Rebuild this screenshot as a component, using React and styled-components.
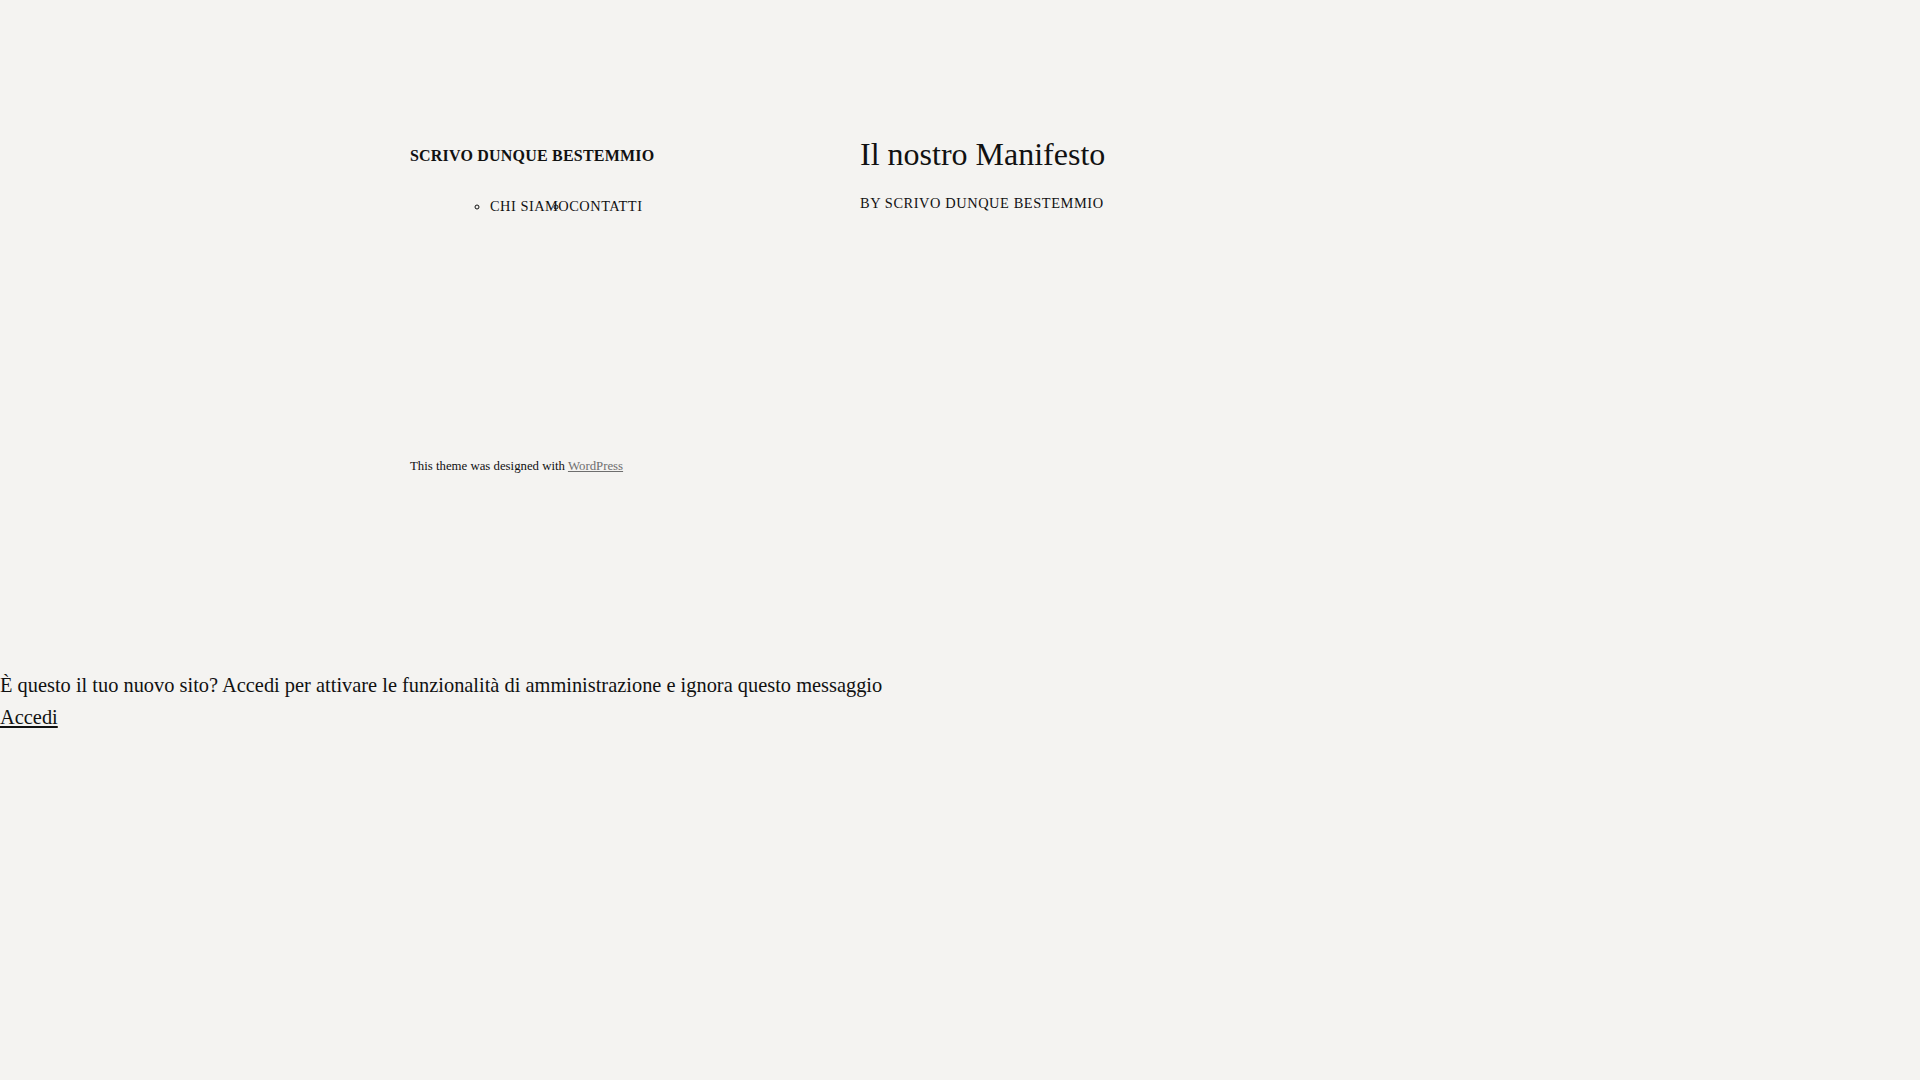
import React from "react";
import styled, { createGlobalStyle } from "styled-components";

const GlobalStyle = createGlobalStyle`
  body {
    margin: 0;
    background: #f4f3f1;
    color: #111;
    font-family: "Liberation Serif", "Times New Roman", serif;
  }
`;

function App() {
  return (
    <>
      <GlobalStyle />
      <Page>
        <Sidebar>
          <SiteTitle>SCRIVO DUNQUE BESTEMMIO</SiteTitle>
          <Nav>
            <NavItem>CHI SIAMO</NavItem>
            <NavItem>CONTATTI</NavItem>
          </Nav>
          <Credit>
            This theme was designed with <CreditLink href="#">WordPress</CreditLink>
          </Credit>
        </Sidebar>
        <Main>
          <PostTitle>Il nostro Manifesto</PostTitle>
          <Byline>BY SCRIVO DUNQUE BESTEMMIO</Byline>
        </Main>
      </Page>
      <Notice>
        <p>È questo il tuo nuovo sito? Accedi per attivare le funzionalità di amministrazione e ignora questo messaggio</p>
        <NoticeLink href="#">Accedi</NoticeLink>
      </Notice>
    </>
  );
}

export default App;

const Page = styled.div`
  display: flex;
  padding: 136px 0 0 410px;
`;
const Sidebar = styled.div`
  width: 450px;
  display: flex;
  flex-direction: column;
  align-items: flex-start;
`;
const SiteTitle = styled.div`
  margin-top: 11px;
  font-size: 16px;
  font-weight: 700;
  letter-spacing: 0.2px;
`;
const Nav = styled.ul`
  display: flex;
  gap: 0;
  list-style: circle;
  margin: 33px 0 0 0;
  padding-left: 80px;
`;
const NavItem = styled.li`
  font-size: 14.4px;
  letter-spacing: 0.5px;
`;
const Credit = styled.div`
  margin-top: 244px;
  font-size: 12.8px;
`;
const CreditLink = styled.a`
  color: #6e6e6e;
`;
const Main = styled.div`
  display: flex;
  flex-direction: column;
  align-items: flex-start;
`;
const PostTitle = styled.h1`
  margin: 0;
  font-size: 32px;
  font-weight: 400;
`;
const Byline = styled.div`
  margin-top: 22px;
  font-size: 14.4px;
  letter-spacing: 0.58px;
`;
const Notice = styled.div`
  margin-top: 195px;
  font-size: 20.4px;
  line-height: 32px;
  p {
    margin: 0;
  }
`;
const NoticeLink = styled.a`
  color: #111;
`;
